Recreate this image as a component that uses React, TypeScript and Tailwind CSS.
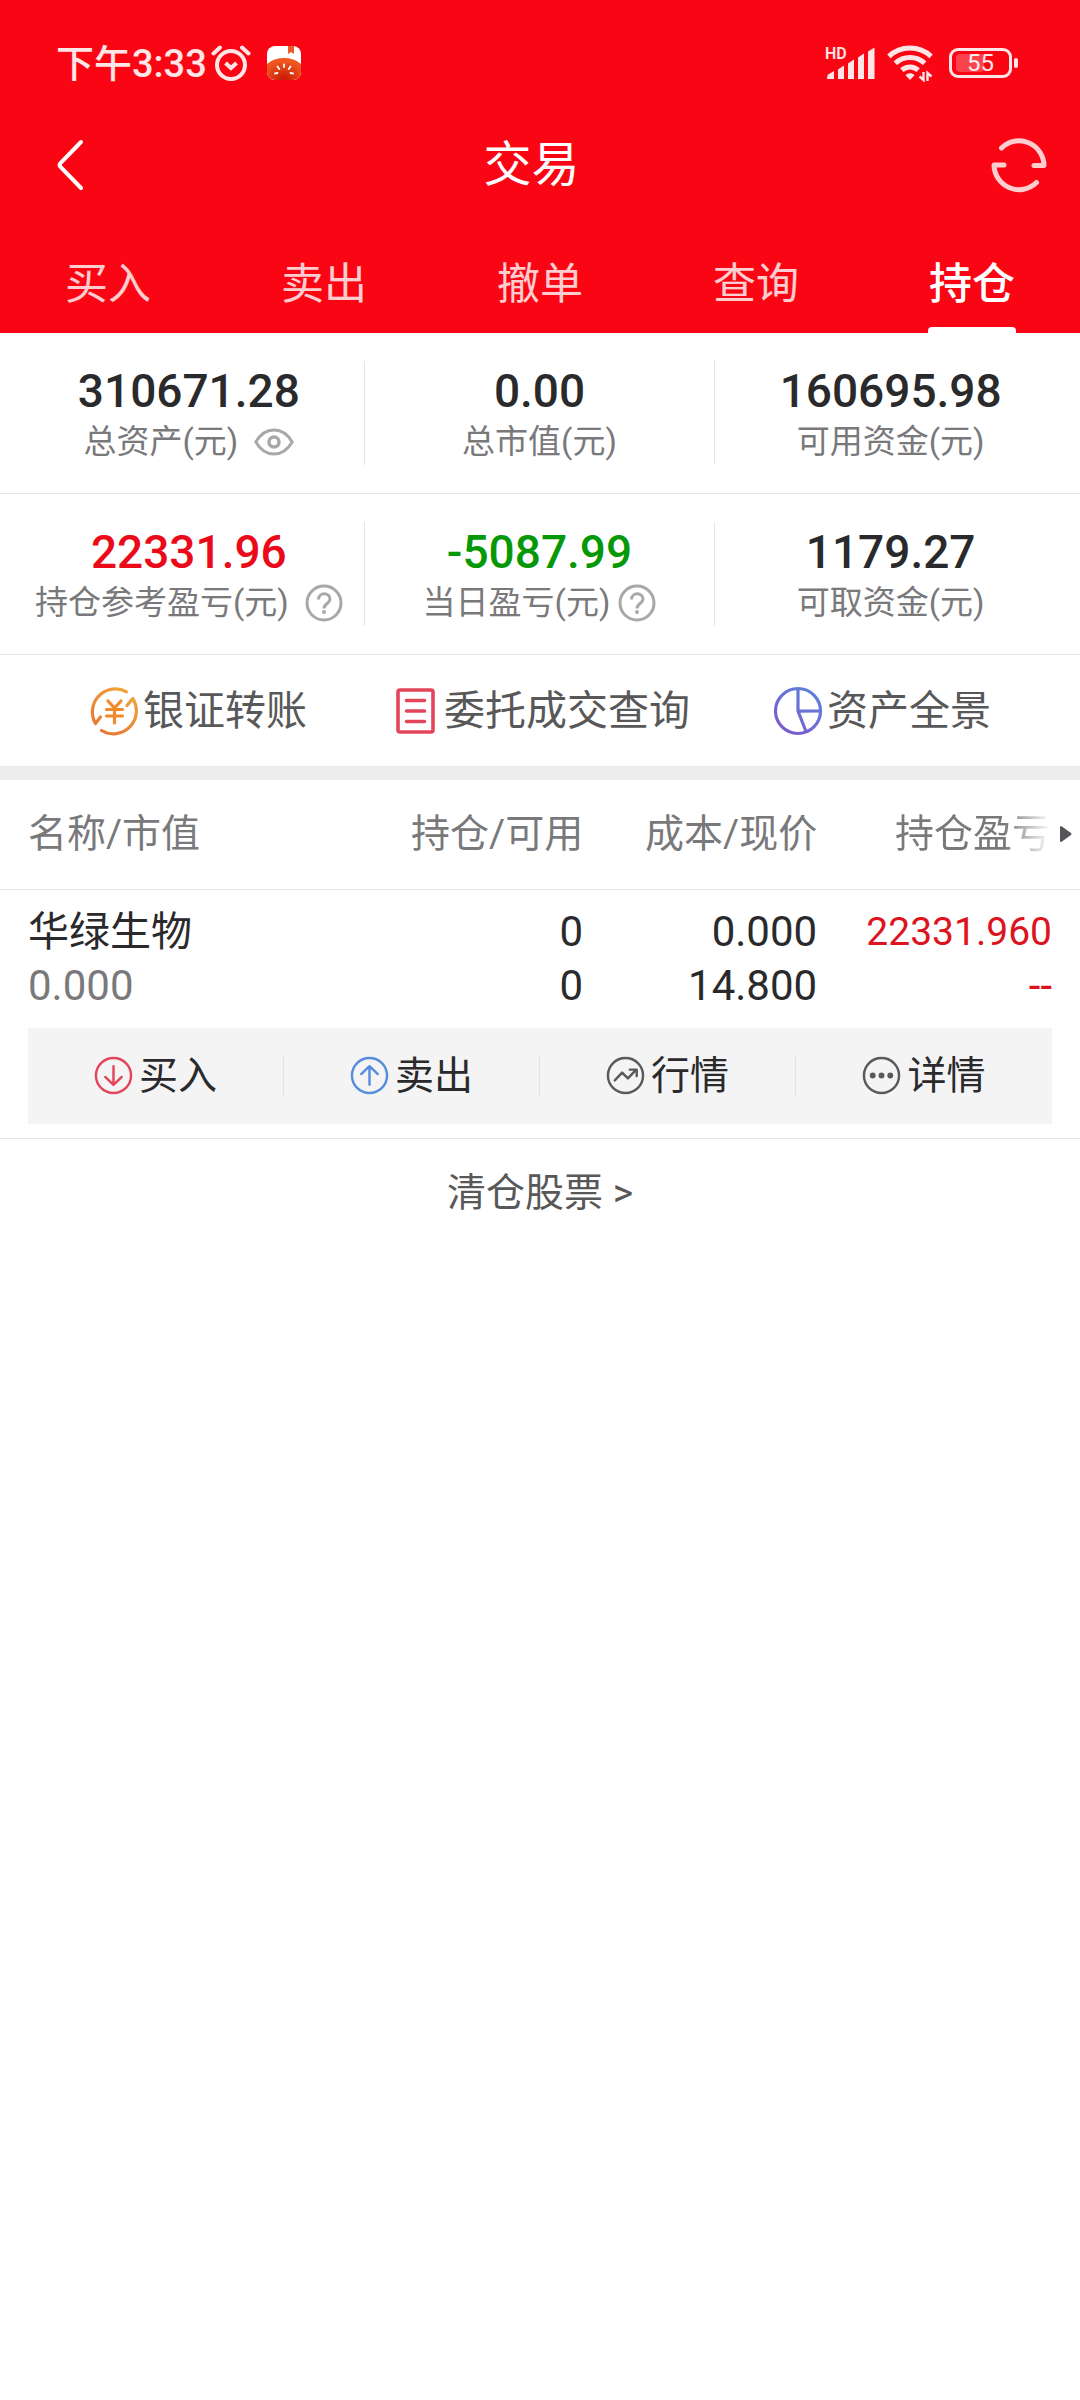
import type { ReactNode } from "react";
import clsx from "clsx";

const tabs = ["买入", "卖出", "撤单", "查询", "持仓"];

const AlarmIcon = () => (
  <svg width={40} height={36} viewBox="0 0 40 36" fill="none" stroke="currentColor" strokeLinecap="round">
    <circle cx={20} cy={20} r={14} strokeWidth={4} />
    <path d="M14.500 18l5.500 5 5.500-5" strokeWidth={4} strokeLinecap="butt" />
    <path d="M2.500 8.500L9 2.500M37.500 8.500L31 2.500" strokeWidth={4} />
  </svg>
);

const TomatoIcon = () => (
  <svg width={34} height={34} viewBox="0 0 34 34">
    <defs>
      <clipPath id="tomato-clip">
        <rect width={34} height={34} rx={8} />
      </clipPath>
      <radialGradient id="tomato-fill" cx="0.5" cy="0.6" r="0.5">
        <stop offset="0" stopColor="#c91a06" />
        <stop offset="1" stopColor="#f0571f" />
      </radialGradient>
    </defs>
    <g clipPath="url(#tomato-clip)">
      <rect width={34} height={34} fill="#fff" />
      <ellipse cx={17} cy={29} rx={22} ry={17} fill="url(#tomato-fill)" />
      <path d="M21 0h6v8l-3-2-3 2z" fill="#ef5a24" />
      <g stroke="#fff" strokeWidth={1.8} strokeLinecap="round">
        <path d="M17 18.500v2.500M10.500 20.500l1.800 2.500M23.500 20.500l-1.800 2.500M8 27.500l2.500-.5M26 27.500l-2.500-.5" />
      </g>
    </g>
  </svg>
);

const SignalIcon = () => (
  <svg width={50} height={42} viewBox="0 -4 50 42" fill="currentColor">
    <text x={0} y={13} fontSize={16} fontWeight={600} fontFamily="Roboto, sans-serif">
      HD
    </text>
    <path d="M2.500 29l6.500-4v8h-7zM13 23.500l6-4V33h-6zM23 17.500l6-4V33h-6zM33 11.500l6-4V33h-6zM43 5.500l6.500-4V33H43z" />
  </svg>
);

const WifiIcon = () => (
  <svg width={46} height={37} viewBox="0 0 46 37" fill="none" stroke="currentColor" strokeWidth={5}>
    <path d="M1.900 11.300a31 31 0 0 1 42.200 0M8.300 18.300a21.500 21.500 0 0 1 29.400 0M14.800 25.200a12 12 0 0 1 16.400 0" />
    <path d="M18.500 30.200c2.500-2.600 6.500-2.600 9 0L23 35z" fill="currentColor" stroke="none" />
    <path d="M36.500 27v8l-4-3.500M40.500 36v-8l4 3.500" strokeWidth={2.4} />
  </svg>
);

const BackIcon = () => (
  <svg width={28} height={52} viewBox="0 0 28 52" fill="none" stroke="currentColor" strokeWidth={4} strokeLinecap="round">
    <path d="M25 3L4.500 24q-1.800 2 0 4L25 49" />
  </svg>
);

const RefreshIcon = () => (
  <svg width={56} height={56} viewBox="0 0 56 56" fill="none" stroke="currentColor" strokeWidth={5} strokeLinecap="round" strokeLinejoin="round">
    <path d="M10.500 11A25 25 0 0 1 53 28.500H43" />
    <path d="M45.500 45.500A25 25 0 0 1 3 28h10" />
  </svg>
);

const EyeIcon = () => (
  <svg width={40} height={28} viewBox="0 0 40 28" fill="none" stroke="#a8a8a8" strokeWidth={3}>
    <path d="M1.800 14C11 -2 29 -2 38.200 14 29 30 11 30 1.800 14z" strokeLinejoin="round" />
    <circle cx={20} cy={14} r={5} strokeWidth={3.5} />
  </svg>
);

const HelpIcon = () => (
  <svg width={38} height={38} viewBox="0 0 38 38" fill="none" stroke="#a8a8a8" strokeWidth={3}>
    <circle cx={19} cy={19} r={17} />
    <path d="M13.500 15.500c0-7.500 11.500-7.500 11.500-.5 0 4.500-6 4.500-6 9.500" />
    <circle cx={19} cy={28} r={2} fill="#a8a8a8" stroke="none" />
  </svg>
);

const TransferIcon = () => (
  <svg width={50} height={50} viewBox="0 0 50 50" fill="none" stroke="url(#transfer-stroke)" strokeWidth={3.2} strokeLinecap="round" strokeLinejoin="round">
    <defs>
      <linearGradient id="transfer-stroke" gradientUnits="userSpaceOnUse" x1={40} y1={4} x2={10} y2={46}>
        <stop offset="0" stopColor="#f0a63a" />
        <stop offset="1" stopColor="#e87634" />
      </linearGradient>
    </defs>
    <path d="M37.500 5.800A23 23 0 0 0 6.500 37.500L11.500 31" />
    <path d="M12.500 44.500A23 23 0 0 0 43.800 12.500L38 19.500" />
    <path d="M19 15l6.500 7 6.500-7M25.500 22v15M17.500 23.500h16M17.500 30h16" stroke="#f28a2c" />
  </svg>
);

const OrderIcon = () => (
  <svg width={50} height={50} viewBox="0 0 50 50" fill="none" stroke="#e3455a" strokeWidth={3.6} strokeLinecap="round">
    <rect x={8} y={4} width={35} height={42} rx={2} />
    <path d="M16.500 14.500h18M16.500 25h18M16.500 35.500h18" />
  </svg>
);

const PieIcon = () => (
  <svg width={50} height={50} viewBox="0 0 50 50" fill="none" stroke="url(#pie-stroke)" strokeWidth={3.2}>
    <defs>
      <linearGradient id="pie-stroke" gradientUnits="userSpaceOnUse" x1={40} y1={5} x2={10} y2={45}>
        <stop offset="0" stopColor="#5f80dc" />
        <stop offset="1" stopColor="#7a5ad0" />
      </linearGradient>
    </defs>
    <circle cx={25} cy={25} r={22.5} />
    <path d="M25 2.500V25l8 20.500M25 25.200l22.500-.2" />
  </svg>
);

const RoundIcon = ({ color, children }: { color: string; children: ReactNode }) => (
  <svg width={39} height={39} viewBox="0 0 40 40" fill="none" stroke={color} strokeWidth={2.5} strokeLinecap="round" strokeLinejoin="round">
    <circle cx={20} cy={20} r={18} />
    {children}
  </svg>
);

const summary = [
  [
    { value: "310671.28", label: "总资产(元)", tone: "text-[#2a2a2c]", gap: "gap-4", icon: <EyeIcon />, hint: "隐藏金额" },
    { value: "0.00", label: "总市值(元)", tone: "text-[#2a2a2c]" },
    { value: "160695.98", label: "可用资金(元)", tone: "text-[#2a2a2c]" },
  ],
  [
    { value: "22331.96", label: "持仓参考盈亏(元)", tone: "text-[#ea0a1a]", gap: "gap-4", icon: <HelpIcon />, hint: "说明" },
    { value: "-5087.99", label: "当日盈亏(元)", tone: "text-[#079807]", gap: "gap-2", icon: <HelpIcon />, hint: "说明" },
    { value: "1179.27", label: "可取资金(元)", tone: "text-[#2a2a2c]" },
  ],
];

const shortcuts = [
  { label: "银证转账", icon: <TransferIcon /> },
  { label: "委托成交查询", icon: <OrderIcon /> },
  { label: "资产全景", icon: <PieIcon /> },
];

const actions = [
  {
    label: "买入",
    icon: (
      <RoundIcon color="#e3455a">
        <path d="M20 10.500v18.500M11.500 21.500l8.500 8 8.500-8" />
      </RoundIcon>
    ),
  },
  {
    label: "卖出",
    icon: (
      <RoundIcon color="#568ddc">
        <path d="M20 29.500V11M11.500 18.500l8.500-8 8.500 8" />
      </RoundIcon>
    ),
  },
  {
    label: "行情",
    icon: (
      <RoundIcon color="#5a5a5c">
        <path d="M9 25l7.500-8 6 6 8-8.500M24.500 14h7v6.500" />
      </RoundIcon>
    ),
  },
  {
    label: "详情",
    icon: (
      <RoundIcon color="#5a5a5c">
        <g fill="#5a5a5c" stroke="none">
          <circle cx={11} cy={20} r={3} />
          <circle cx={20} cy={20} r={3} />
          <circle cx={29} cy={20} r={3} />
        </g>
      </RoundIcon>
    ),
  },
];

const Header = () => (
  <header className="bg-[#fa0513] text-white">
    <div className="flex h-[126px] items-center justify-between pr-[62px] pl-14 text-white/90">
      <div className="flex items-center">
        <span className="pt-[2px] text-[38px] leading-10 font-medium">下午3:33</span>
        <span className="ml-1 flex items-center gap-4">
          <AlarmIcon />
          <TomatoIcon />
        </span>
      </div>
      <div className="flex items-center">
        <SignalIcon />
        <span className="ml-3">
          <WifiIcon />
        </span>
        <div className="ml-4 flex items-center gap-[2px]">
          <div className="relative flex h-[30px] w-[63px] items-center justify-center rounded-[9px] border-3 border-current">
            <span className="absolute inset-y-[3px] left-1 w-[28px] rounded-sm bg-white/25" />
            <span className="relative text-[24px] leading-6">55</span>
          </div>
          <span className="h-[10px] w-1 rounded-sm bg-current" />
        </div>
      </div>
    </div>

    <div className="flex h-[78px] items-center pr-[33px] pl-14">
      <button type="button" aria-label="返回">
        <BackIcon />
      </button>
      <h1 className="flex-1 pr-3 text-center text-[48px] leading-[56px]">交易</h1>
      <button type="button" aria-label="刷新" className="text-white/80">
        <RefreshIcon />
      </button>
    </div>

    <nav className="mt-7 grid h-[101px] grid-cols-5">
      {tabs.map((tab) => {
        const active = tab === "持仓";
        return (
          <button
            key={tab}
            type="button"
            className={clsx(
              "relative pt-[2px] text-[43px] leading-[48px]",
              active ? "font-medium text-white" : "text-white/80"
            )}
          >
            {tab}
            {active && (
              <span className="absolute bottom-0 left-1/2 h-[6px] w-[88px] -translate-x-1/2 rounded-t-sm bg-white" />
            )}
          </button>
        );
      })}
    </nav>
  </header>
);

const Summary = () => (
  <section>
    {summary.map((row, index) => (
      <div key={index} className="grid grid-cols-3 border-b border-[#e4e4e4] px-[14px] py-7">
        {row.map((item) => (
          <div
            key={item.label}
            className="flex h-[104px] flex-col items-center border-r border-[#e4e4e4] pt-1 last:border-r-0"
          >
            <span className={clsx("text-[46px] leading-[52px] font-medium", item.tone)}>{item.value}</span>
            <span className={clsx("flex items-center", item.gap)}>
              <span className="text-[33px] leading-[50px] whitespace-nowrap text-[#79797b]">{item.label}</span>
              {item.icon && (
                <button type="button" aria-label={item.hint}>
                  {item.icon}
                </button>
              )}
            </span>
          </div>
        ))}
      </div>
    ))}
  </section>
);

const Shortcuts = () => (
  <div className="flex h-[125px] items-center justify-between border-b-14 border-[#ededed] px-[89px]">
    {shortcuts.map((item) => (
      <button key={item.label} type="button" className="flex items-center gap-1 text-[41px] leading-[48px] text-[#585858]">
        {item.icon}
        {item.label}
      </button>
    ))}
  </div>
);

const Positions = () => (
  <section>
    <table className="w-full table-fixed text-right">
      <thead>
        <tr className="h-[109px] border-b border-[#e4e4e4] text-[39px] leading-[48px] text-[#79797b]">
          <th className="w-[32%] pl-7 text-left font-normal">名称/市值</th>
          <th className="w-[22%] font-normal">持仓/可用</th>
          <th className="w-[234px] font-normal">成本/现价</th>
          <th className="font-normal">
            <div className="flex items-center justify-end gap-2 pr-2">
              <span className="bg-linear-to-r from-[#79797b] from-70% to-transparent bg-clip-text text-transparent">
                持仓盈亏
              </span>
              <svg width={13} height={18} viewBox="0 0 13 18" fill="#55555a">
                <path d="M1 2.500Q1 0 3 1.500l9 6.500q1 1 0 2l-9 6.500q-2 1.500-2-1z" />
              </svg>
            </div>
          </th>
        </tr>
      </thead>
      <tbody className="text-[42px] leading-[54px] text-[#2a2a2c]">
        <tr>
          <td className="pt-[15px] pl-7 text-left text-[41px]">华绿生物</td>
          <td className="pt-[15px]">0</td>
          <td className="pt-[15px]">0.000</td>
          <td className="pt-[15px] pr-7 text-[39px] text-[#dc1420]">22331.960</td>
        </tr>
        <tr>
          <td className="pl-7 text-left text-[#79797b]">0.000</td>
          <td>0</td>
          <td>14.800</td>
          <td className="pr-7 text-[#dc1420]">--</td>
        </tr>
      </tbody>
    </table>

    <div className="border-b border-[#e4e4e4] px-7 pt-[15px] pb-[14px]">
      <div className="grid h-24 grid-cols-4 items-center bg-[#f4f4f4]">
        {actions.map((action) => (
          <button
            key={action.label}
            type="button"
            className="flex h-10 items-center justify-center gap-[6px] border-r border-[#e4e4e4] text-[39px] leading-[48px] text-[#2a2a2c] last:border-r-0"
          >
            {action.icon}
            {action.label}
          </button>
        ))}
      </div>
    </div>
  </section>
);

const App = () => {
  return (
    <main className="min-h-screen bg-white font-[Roboto,'Noto_Sans_CJK_SC',sans-serif]">
      <Header />
      <Summary />
      <Shortcuts />
      <Positions />
      <a href="#cleared" className="block py-[30px] text-center text-[39px] leading-[48px] text-[#585858]">
        清仓股票 &gt;
      </a>
    </main>
  );
};

export default App;
